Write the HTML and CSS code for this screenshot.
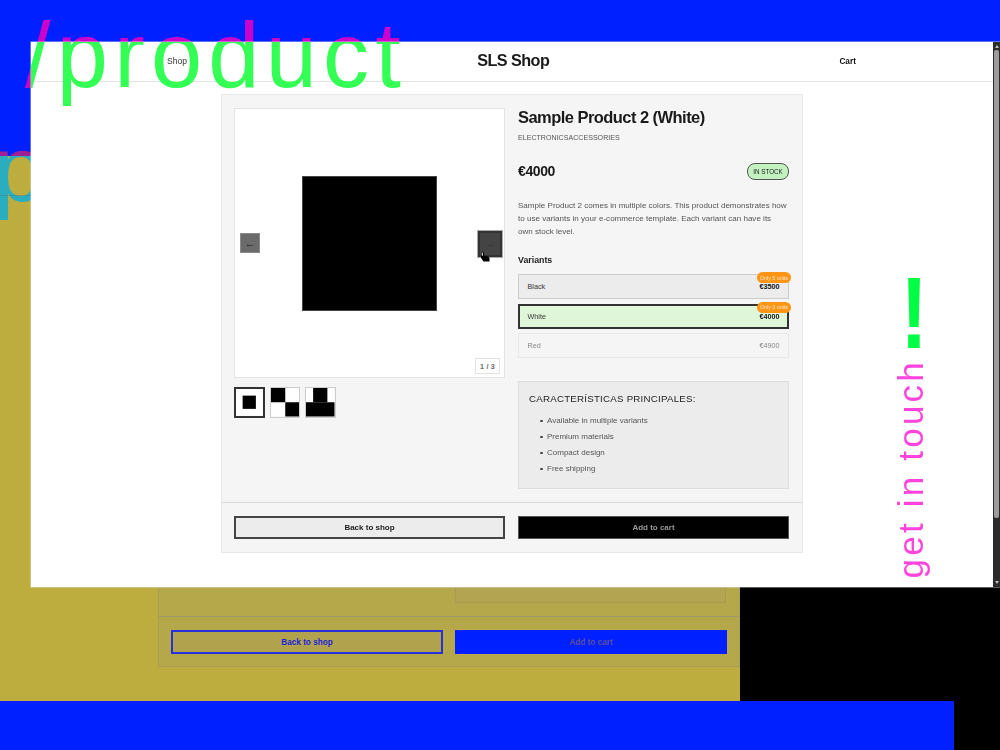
FILE: index.html
```html
<!DOCTYPE html>
<html lang="en">
<head>
<meta charset="utf-8">
<title>SLS Shop</title>
<link rel="stylesheet" href="styles.css">
</head>
<body>
<div class="screen">
  <div class="band-top">
    <div class="big-word word-back">/product</div>
    <div class="big-word word-ghost-top">/product</div>
  </div>
  <div class="band-mid">
    <div class="big-word word-ghost-mid">/product</div>
    <div class="ghost-line"></div>
    <div class="ghost-card">
      <div class="ghost-body"><div class="ghost-features"></div></div>
      <div class="ghost-footer">
        <button class="ghost-btn ghost-back">Back to shop</button>
        <button class="ghost-btn ghost-add">Add to cart</button>
      </div>
    </div>
  </div>
  <div class="band-bottom"></div>

  <div class="window">
    <div class="viewport">
      <header class="site-header">
        <a class="nav-link">Shop</a>
        <div class="logo">SLS Shop</div>
        <a class="nav-link nav-cart">Cart</a>
      </header>
      <main class="page">
        <section class="card">
          <div class="card-body">
            <div class="gallery">
              <div class="stage">
                <div class="main-image"></div>
                <button class="arrow arrow-prev">←</button>
                <button class="arrow arrow-next">→</button>
                <svg class="cursor" width="10" height="11" viewBox="0 0 10 11"><path d="M1 1.500 2.500 .5 4 1.500V4.500L8 5.500 9.500 7V10.500H3.500L1 7Z" fill="#000"/><path d="M1.500 1.500H3V4.800L1.800 5Z" fill="#bbb"/></svg>
                <div class="counter">1 / 3</div>
              </div>
              <div class="thumbs">
                <svg class="thumb thumb-active" viewBox="0 0 30 30"><rect width="30" height="30" fill="#fff"/><rect x="7.500" y="7.500" width="15" height="15"/></svg>
                <svg class="thumb" viewBox="0 0 30 30"><rect width="30" height="30" fill="#fff"/><rect width="15" height="15"/><rect x="15" y="15" width="15" height="15"/></svg>
                <svg class="thumb" viewBox="0 0 30 30"><rect width="30" height="30" fill="#fff"/><rect x="7.500" width="15" height="15"/><rect y="15" width="30" height="15"/></svg>
              </div>
            </div>
            <div class="info">
              <h1 class="title">Sample Product 2 (White)</h1>
              <div class="cats"><span>Electronics</span><span>Accessories</span></div>
              <div class="price-row">
                <div class="price">€4000</div>
                <div class="stock">IN STOCK</div>
              </div>
              <p class="desc">Sample Product 2 comes in multiple colors. This product demonstrates how to use variants in your e-commerce template. Each variant can have its own stock level.</p>
              <h2 class="variants-label">Variants</h2>
              <div class="variants">
                <div class="variant"><span>Black</span><b class="v-price">€3500</b><span class="units">Only 5 units</span></div>
                <div class="variant variant-on"><span>White</span><b class="v-price">€4000</b><span class="units">Only 3 units</span></div>
                <div class="variant variant-off"><span>Red</span><span>€4900</span></div>
              </div>
              <div class="features">
                <h3 class="features-title">CARACTERÍSTICAS PRINCIPALES:</h3>
                <ul class="features-list">
                  <li>Available in multiple variants</li>
                  <li>Premium materials</li>
                  <li>Compact design</li>
                  <li>Free shipping</li>
                </ul>
              </div>
            </div>
          </div>
          <div class="card-footer">
            <button class="btn btn-back">Back to shop</button>
            <button class="btn btn-add">Add to cart</button>
          </div>
        </section>
      </main>
      <div class="big-word word-front">/product</div>
      <div class="touch">
        <span class="touch-mark">!</span>
        <span class="touch-text">get in touch</span>
      </div>
    </div>
    <div class="scrollbar">
      <span class="sb-up"></span>
      <span class="sb-thumb"></span>
      <span class="sb-down"></span>
    </div>
  </div>
</div>
</body>
</html>
```
FILE: styles.css
```css
* { box-sizing: border-box; }
html, body { margin: 0; height: 100%; }
body { background: #000; overflow: hidden; font-family: "Liberation Sans", Arial, sans-serif; }
h1, h2, h3, p, ul { margin: 0; padding: 0; }
button { font-family: inherit; padding: 0; cursor: pointer; }

.screen { position: relative; width: 1000px; height: 750px; overflow: hidden; filter: blur(.35px); }

.band-top { position: relative; height: 156px; background: #0020ff; overflow: hidden; }
.band-mid { position: relative; width: 740px; height: 545px; background: #bdad3f; overflow: hidden; display: flex; flex-direction: column; }
.band-bottom { width: 954px; height: 49px; background: #0020ff; }

.big-word { position: absolute; font-size: 92px; line-height: 1; letter-spacing: 6.200px; white-space: nowrap; }
.word-back { left: 25px; top: 9px; color: #cc00cc; }
.word-ghost-top { left: -38px; top: 123px; color: #a01f96; }
.word-ghost-mid { left: -38px; top: -33px; color: #2aaebf; }
.word-front { left: -6px; top: -33px; color: #33ff55; }
.ghost-line { position: absolute; left: 0; top: 39px; width: 31px; height: 1px; background: rgba(70, 110, 130, .35); }

.ghost-card { margin: auto 0 34px 158px; width: 582px; height: 267px; background: #b5a84a; border: 1px solid #a89d52; display: flex; flex-direction: column; }
.ghost-body { flex: 1; display: flex; justify-content: flex-end; align-items: flex-end; padding: 0 13px 13px; }
.ghost-features { width: 271px; height: 100px; background: #b2a450; border: 1px solid #a89c55; }
.ghost-footer { display: grid; grid-template-columns: 272px 272px; column-gap: 12px; padding: 13px 12px 12px 12px; border-top: 1px solid #a0966a; }
.ghost-btn { height: 24px; font-size: 8.200px; font-weight: 700; border: 0; }
.ghost-back { color: #1a22d8; background: #b1a24e; border: 2px solid #2a2fdc; }
.ghost-add { color: #5b4f9e; background: #0020ff; }

.window { position: absolute; left: 31px; top: 42px; width: 969px; height: 545px; display: flex; background: #fff; box-shadow: 0 0 0 .5px rgba(230, 230, 230, .8); }
.viewport { position: relative; width: 962px; overflow: hidden; }

.scrollbar { width: 7px; background: #2b2b2b; display: flex; flex-direction: column; align-items: center; }
.sb-up, .sb-down { width: 0; height: 0; border-left: 2px solid transparent; border-right: 2px solid transparent; }
.sb-up { margin-top: 3px; border-bottom: 3px solid #bbb; }
.sb-down { margin-top: auto; margin-bottom: 3px; border-top: 3px solid #bbb; }
.sb-thumb { width: 5px; height: 468px; margin-top: 2px; border-radius: 2px; background: #9c9c9c; }

.site-header { height: 40px; display: flex; align-items: center; justify-content: space-between; padding: 0 137px 2px 136px; border-bottom: 1px solid #e4e4e4; }
.nav-link { font-size: 8.600px; color: #333; }
.nav-cart { font-size: 8.300px; font-weight: 700; color: #111; }
.logo { font-size: 16.200px; font-weight: 700; letter-spacing: -.55px; color: #1a1a1a; }

.page { padding-top: 12px; display: flex; justify-content: center; }
.card { width: 582px; background: #f5f5f5; border: 1px solid #e8e8e8; }
.card-body { display: grid; grid-template-columns: 271px 271px; column-gap: 13px; padding: 13px 13px 13px 12px; }

.stage { position: relative; height: 270px; background: #fff; border: 1px solid #e2e2e2; display: flex; align-items: center; justify-content: center; }
.main-image { width: 135px; height: 135px; margin-top: 1px; background: #000; border: 1px solid #444; }
.arrow { position: absolute; font-size: 9px; line-height: 1; color: #222; }
.arrow-prev { left: 5px; top: 124px; width: 20px; height: 20px; font-size: 11px; background: #6b6b6b; border: 1px solid #8a8a8a; }
.arrow-next { left: 243px; top: 122px; width: 24px; height: 26px; background: #444; border: 2px solid #333; outline: 1px solid #aaa; color: #333; }
.cursor { position: absolute; left: 245px; top: 142px; }
.counter { position: absolute; right: 4px; bottom: 3px; width: 25px; height: 16px; background: #fff; border: 1px solid #e2e2e2; font-size: 7px; font-weight: 700; letter-spacing: .3px; color: #666; display: flex; align-items: center; justify-content: center; }

.thumbs { display: flex; gap: 5px; margin-top: 9px; }
.thumb { display: block; width: 30.500px; height: 30.500px; border: 1px solid #ccc; }
.thumb-active { border: 2px solid #333; }

.title { font-size: 16.500px; line-height: 19px; font-weight: 700; letter-spacing: -.55px; color: #1a1a1a; }
.cats { margin-top: 6px; font-size: 7.100px; line-height: 10px; color: #555; text-transform: uppercase; }
.price-row { margin-top: 20px; display: flex; align-items: center; justify-content: space-between; }
.price { font-size: 14px; line-height: 15px; font-weight: 700; letter-spacing: -.4px; color: #1a1a1a; }
.stock { width: 42px; height: 17px; border: 1px solid #555; border-radius: 8px; background: #c3f1c0; font-size: 6.300px; color: #222; display: flex; align-items: center; justify-content: center; }
.desc { margin-top: 18.500px; padding-right: 2px; font-size: 8.050px; line-height: 13px; color: #555; }
.variants-label { margin-top: 17px; font-size: 8.800px; line-height: 11px; font-weight: 700; color: #222; }

.variants { margin-top: 8.500px; display: flex; flex-direction: column; gap: 4.500px; }
.variant { position: relative; height: 25px; display: flex; align-items: center; justify-content: space-between; padding: 0 8.500px; background: #ececec; border: 1px solid #ccc; font-size: 7.200px; color: #333; }
.v-price { color: #111; }
.variant-on { background: #dff6d9; border: 2px solid #333; padding: 0 7.500px; }
.variant-off { background: #f5f5f5; border-color: #e8e8e8; color: #888; }
.units { position: absolute; right: -3px; top: -3px; height: 11px; width: 34px; border-radius: 6px; background: #ff9514; color: #ffe9c8; font-size: 5.300px; display: flex; align-items: center; justify-content: center; }
.variant-on .units { right: -4px; top: -4px; }

.features { margin-top: 23px; padding: 11px 10px; background: #ececec; border: 1px solid #ddd; }
.features-title { font-size: 9.700px; line-height: 12px; font-weight: 400; letter-spacing: .25px; color: #222; }
.features-list { margin-top: 8px; padding-left: 11px; list-style: none; font-size: 8px; line-height: 16px; color: #555; }
.features-list li { display: flex; align-items: center; gap: 4.500px; }
.features-list li::before { content: ""; width: 2.500px; height: 2.500px; border-radius: 50%; background: #444; }

.card-footer { display: grid; grid-template-columns: 271px 271px; column-gap: 13px; padding: 13px 13px 13px 12px; border-top: 1px solid #d8d8d8; }
.btn { height: 23px; font-size: 8px; font-weight: 700; }
.btn-back { background: #ececec; color: #222; border: 2px solid #444; }
.btn-add { background: #000; color: #999; border: 1px solid #555; }

.touch { position: absolute; left: 860.500px; top: 233px; width: 37px; display: flex; flex-direction: column; align-items: center; }
.touch-mark { font-size: 102px; line-height: 77px; height: 84px; margin-left: 8px; font-weight: 700; color: #00ff44; transform: scaleX(.8); }
.touch-text { writing-mode: vertical-rl; transform: rotate(180deg); font-size: 35px; line-height: 37px; letter-spacing: 3.200px; white-space: nowrap; color: #ff44dd; }
```
